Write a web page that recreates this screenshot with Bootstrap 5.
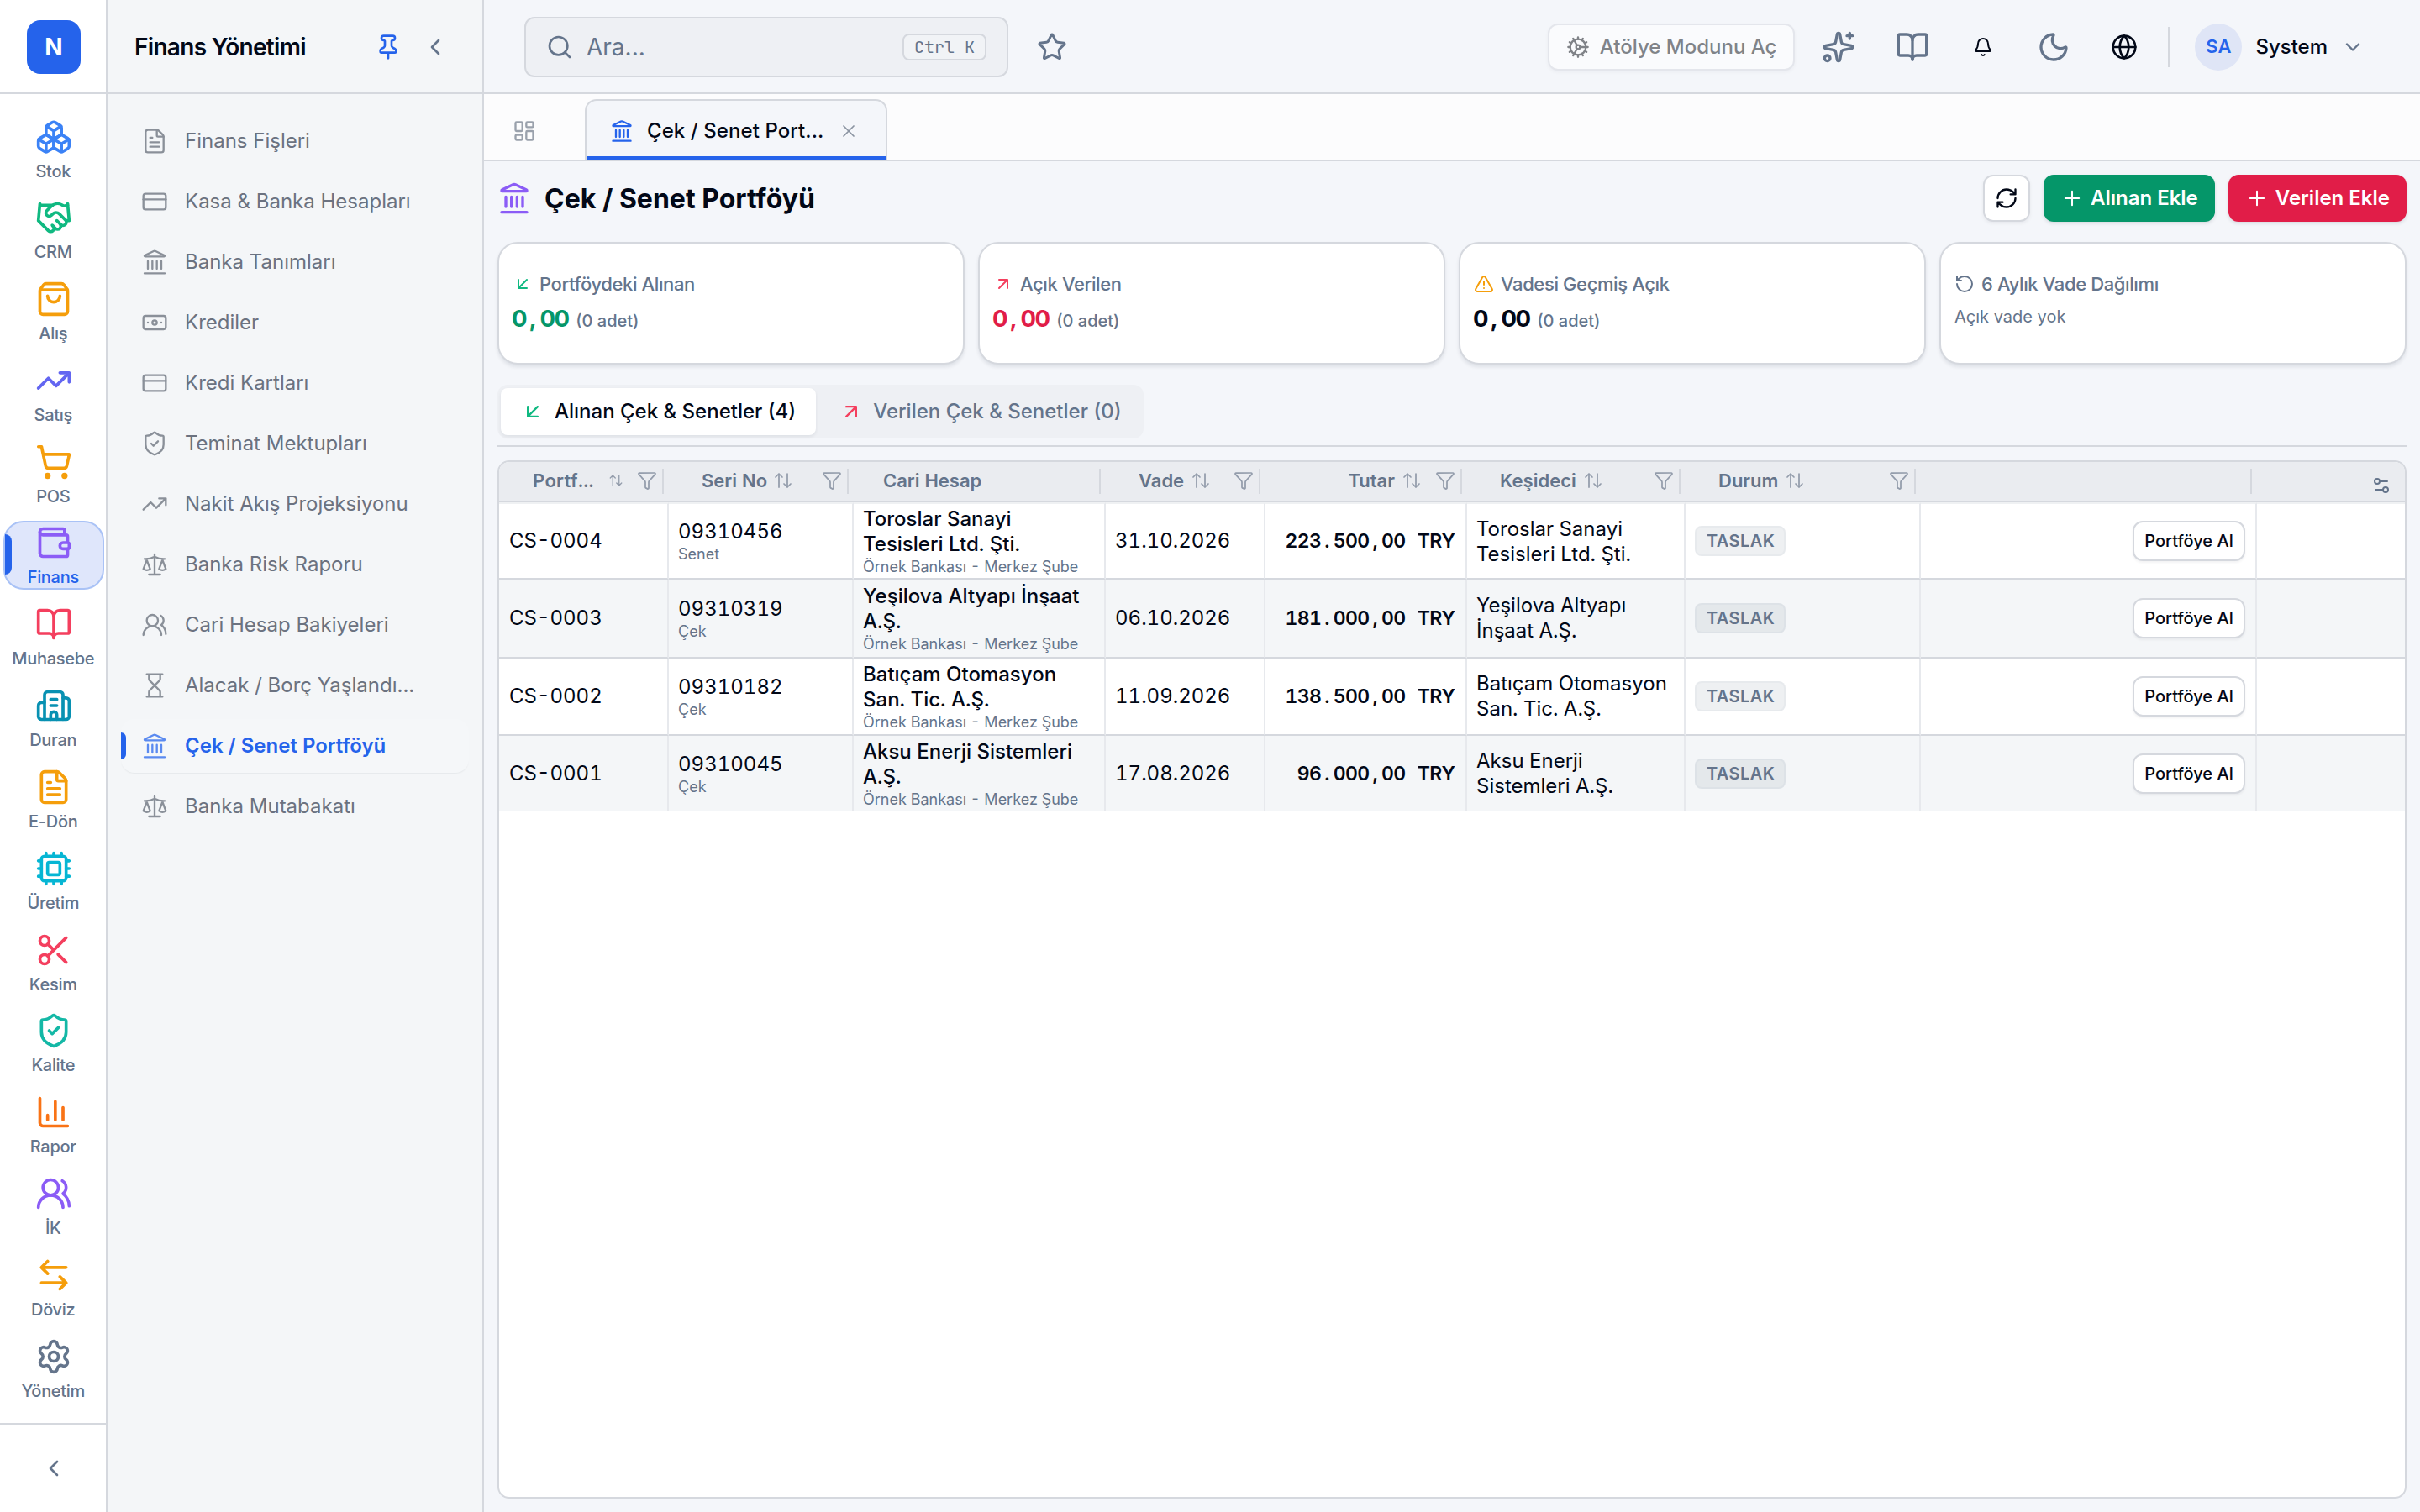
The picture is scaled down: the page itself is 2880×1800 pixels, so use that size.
<!DOCTYPE html>
<html lang="tr">
<head>
<meta charset="utf-8">
<meta name="viewport" content="width=device-width, initial-scale=1">
<title>Çek / Senet Portföyü</title>
<link href="https://cdn.jsdelivr.net/npm/bootstrap@5.3.0/dist/css/bootstrap.min.css" rel="stylesheet">
<script src="https://cdn.jsdelivr.net/npm/bootstrap@5.3.0/dist/js/bootstrap.bundle.min.js"></script>
<style>
:root{--line:#d5d8de;--ink:#020817;--slate:#64748b;--blue:#2563eb;--page:#f4f6fa}
html,body{height:100%}
body{font-family:Inter,"Noto Sans",sans-serif;font-size:24px;line-height:32px;color:var(--ink);background:var(--page);overflow:hidden}
svg.ic{fill:none;stroke:currentColor;stroke-width:2;stroke-linecap:round;stroke-linejoin:round;flex:none;display:block;width:28px;height:28px}
svg.s18{width:18px;height:18px}svg.s24{width:24px;height:24px}svg.s32{width:32px;height:32px}svg.s36{width:36px;height:36px}svg.s40{width:40px;height:40px}svg.s44{width:44px;height:44px}
svg.thin{stroke-width:1.75}
.c-slate{color:var(--slate)}.c-blue{color:var(--blue)}.c-mute{color:#8a93a1}
.w5{font-weight:500}.w6{font-weight:600}

.rail{width:128px;border-right:2px solid var(--line);background:#fff}
.rail-top,.panel-top{height:112px;border-bottom:2px solid var(--line)}
.rail-top{padding-top:2px}
.logo{width:64px;height:64px;border-radius:16px;background:var(--blue);font-size:28px;font-weight:700;color:#fff;margin-left:2px}
.rail-nav{padding:24px 2px 24px 4px}
.rail-item{height:82px;border:2px solid transparent;border-radius:24px;padding-top:2px;gap:6px;position:relative}
.rail-item:not(.on){padding-top:2.6px}
.rail-item span{font-size:20px;line-height:26px;font-weight:500;letter-spacing:-.3px;color:var(--slate);margin-right:1.5px}
.rail-item.on{background:#dfe6fb;border-color:#a9c2f6}
.rail-item.on span{color:var(--blue)}
.rail-item.on::before{content:"";position:absolute;left:0;top:14px;width:8px;height:48px;border-radius:0 8px 8px 0;background:var(--blue)}
.rail-foot{height:106px;border-top:2px solid var(--line);padding-left:2px}

.panel{width:448px;border-right:2px solid var(--line);background:#f4f6f8}
.panel-top{padding:2px 40px 0 32px}
.panel-title{font-size:28px;font-weight:600;letter-spacing:-.7px}
.menu{padding:24px 16px;gap:8px}
.menu-item{height:64px;padding:0 24px;gap:20px;border-radius:16px;color:#6b7280;position:relative}
.menu-item svg{color:#8a9099}
.menu-item.on{color:var(--blue);font-weight:600;background:#f5f7f9;box-shadow:0 2px 2px -1px rgba(15,23,42,.07)}
.menu-item.on svg{color:#5a8af0}
.menu-item.on::before{content:"";position:absolute;left:0;top:16px;width:6px;height:32px;border-radius:0 6px 6px 0;background:var(--blue)}

.topbar{height:112px;border-bottom:2px solid var(--line);padding:2px 66px 0 48px}
.search-box{width:576px;height:72px;border:2px solid var(--line);border-radius:12px;background:#eef0f4;padding:0 24px;gap:16px;font-size:28px;color:var(--slate)}
.keycap{height:32px;border:2px solid var(--line);border-radius:8px;padding:0 12px;font:20px/28px "JetBrains Mono","Liberation Mono",monospace;background:#f1f3f6}
.mode-btn{height:56px;border:2px solid #e4e6ec;border-radius:12px;background:#fafbfd;color:#808388;padding:0 20px;gap:12px;font-weight:500;box-shadow:0 2px 4px rgba(15,23,42,.04)}
.tool{width:72px;height:72px}.tool-n{width:64px;height:64px}
.vbar{width:2px;height:48px;background:var(--line);margin-left:4px}
.avatar{width:56px;height:56px;border-radius:50%;background:#dfe5f6;color:var(--blue);font-weight:600;font-size:22px;padding-bottom:3px}

.tabstrip{height:80px;border-bottom:2px solid var(--line);background:#fcfcfd;padding-left:34px}
.home-tab{width:28px;margin-right:58px;padding-top:10px;color:#9aa1ac}
.doc-tab{width:360px;height:72px;border:2px solid var(--line);border-bottom:0;border-radius:14px 14px 0 0;background:var(--page);padding:1px 0 0 28px;position:relative}
.doc-tab::after{content:"";position:absolute;left:0;right:0;bottom:0;height:4px;background:var(--blue)}
.doc-name{font-weight:500;letter-spacing:.08px;margin:0 18px 0 16px}

.content{padding:16px}
.page-title{font-size:32px;font-weight:700;line-height:40px;padding-top:2px}
.act{height:56px;border-radius:12px;color:#fff;font-weight:600;padding:0 20px;gap:8px;box-shadow:0 2px 4px rgba(15,23,42,.12)}
.act-icon{width:56px;height:56px;border-radius:12px;border:2px solid var(--line);background:#fff;box-shadow:0 2px 4px rgba(15,23,42,.06)}
.bg-rec{background:#059669}.bg-giv{background:#e11d48}
.kpis{gap:16px;margin-top:24px}
.kpi{flex:1 1 0;height:146px;border:2px solid var(--line);border-radius:24px;background:#fff;padding:32px 16px 0;box-shadow:0 3px 4px rgba(15,23,42,.09)}
.kpi-head{font-size:22px;font-weight:500;color:var(--slate);gap:8px;letter-spacing:-.38px}
.kpi-val{gap:8px;line-height:40px;margin-top:5px}
.kpi-val small{font-size:20px;font-weight:500;color:var(--slate)}
.kpi-note{font-size:20px;line-height:28px;margin-top:9px;color:var(--slate)}

.money{font-size:23px;font-weight:600;white-space:pre;letter-spacing:-.6px}
.money i{font-style:normal;display:inline-block;width:14.4px;text-align:center;letter-spacing:0}
.money-lg{font-size:27.5px;font-weight:700;margin-left:-1px;margin-right:1px}
.money-lg i{width:16.8px}

.segs{margin-top:24px}
.seg-wrap{height:64px;border-radius:12px;background:#eef0f4;padding:4px 3px 4px 4px;gap:4px}
.seg{height:56px;border-radius:8px;padding:0 24px;gap:12px;font-weight:500;color:var(--slate)}
.seg:last-child{padding-right:23px}
.seg.on{background:#fff;color:var(--ink);box-shadow:0 2px 4px rgba(15,23,42,.07)}
.rule{height:2px;background:var(--line);margin:8px 0 16px}

.grid-box{border:2px solid var(--line);border-radius:14px;background:#fff;overflow:hidden}
.grid{table-layout:fixed;width:2268px;border-collapse:separate;border-spacing:0;margin:0;font-variant-numeric:tabular-nums;color:var(--ink);line-height:30px}
.grid>thead>tr>th{height:48px;padding:0 14px 2px 40px;background:#eaecf0;border-bottom:2px solid var(--line);font-size:22px;font-weight:600;color:var(--slate);position:relative;vertical-align:middle;box-shadow:none;line-height:28px}
.grid>thead>tr>th:not(:last-child)::after{content:"";position:absolute;right:6px;top:8px;width:2px;height:30px;background:var(--line)}
.grid>thead svg{color:#939cab;stroke-width:1.75}
.grid>tbody>tr>td{height:92px;padding:0 14px 0 11px;border:0 solid var(--line);border-right:2px solid #e7e9ed;border-bottom:2px solid var(--line);vertical-align:middle;background:#fff;box-shadow:none;color:var(--ink)}
.grid>tbody>tr>td:first-child{padding-left:12px}
.grid>tbody>tr>td:nth-child(2){padding-top:2px}
.grid>tbody>tr>td:nth-child(3){padding-top:1px}
.grid>tbody>tr>td:nth-child(6){padding-right:8px}
.grid>tbody>tr:first-child>td:nth-child(6){padding-top:1px}
.grid>tbody>tr>td:nth-child(8){padding-right:12px}
.grid>tbody>tr>td:last-child{border-right:0}
.grid>tbody>tr:first-child>td{border-top:2px solid #eff1f3}
.grid>tbody>tr:nth-child(even)>td{background:#f4f6f8}
.grid>tbody>tr:nth-child(2)>td{height:94px}
.grid>tbody>tr:last-child>td{height:90px;border-bottom:0}
.sub{font-size:18px;line-height:24px;color:var(--slate)}
.state{display:inline-block;height:36px;border:2px solid rgba(100,116,139,.05);border-radius:8px;background:rgba(100,116,139,.11);color:var(--slate);font-size:20px;line-height:32px;font-weight:600;letter-spacing:.4px;padding:0 11px 0 12px;vertical-align:middle}
.row-btn{display:inline-block;height:48px;width:134px;border:2px solid var(--line);border-radius:12px;background:#fff;font-size:20px;font-weight:500;line-height:44px;text-align:center;vertical-align:middle;box-shadow:0 2px 3px rgba(15,23,42,.05);white-space:nowrap}
</style>
</head>
<body>
<svg class="d-none" xmlns="http://www.w3.org/2000/svg">
<symbol id="boxes" viewBox="0 0 24 24"><path d="M2.97 12.92A2 2 0 0 0 2 14.63v3.24a2 2 0 0 0 .97 1.71l3 1.8a2 2 0 0 0 2.06 0L12 19v-5.5l-5-3-4.03 2.42Z"/><path d="m7 16.5-4.74-2.85M7 16.5l5-3M7 16.5v5.17"/><path d="M12 13.5V19l3.97 2.38a2 2 0 0 0 2.06 0l3-1.8a2 2 0 0 0 .97-1.71v-3.24a2 2 0 0 0-.97-1.71L17 10.5l-5 3Z"/><path d="m17 16.5-5-3M17 16.5l4.74-2.85M17 16.5v5.17"/><path d="M7.97 4.42A2 2 0 0 0 7 6.13v4.37l5 3 5-3V6.13a2 2 0 0 0-.97-1.71l-3-1.8a2 2 0 0 0-2.06 0l-3 1.8Z"/><path d="M12 8 7.26 5.15M12 8l4.74-2.85M12 13.5V8"/></symbol>
<symbol id="handshake" viewBox="0 0 24 24"><path d="m11 17 2 2a1 1 0 1 0 3-3"/><path d="m14 14 2.5 2.5a1 1 0 1 0 3-3l-3.88-3.88a3 3 0 0 0-4.24 0l-.88.88a1 1 0 1 1-3-3l2.81-2.81a5.79 5.79 0 0 1 7.06-.87l.47.28a2 2 0 0 0 1.42.25L21 4"/><path d="m21 3 1 11h-2M3 3 2 14l6.5 6.5a1 1 0 1 0 3-3M3 4h8"/></symbol>
<symbol id="bag" viewBox="0 0 24 24"><path d="M16 10a4 4 0 0 1-8 0M3.103 6.034h17.794"/><path d="M3.4 5.467a2 2 0 0 0-.4 1.2V20a2 2 0 0 0 2 2h14a2 2 0 0 0 2-2V6.667a2 2 0 0 0-.4-1.2l-2-2.667A2 2 0 0 0 17 2H7a2 2 0 0 0-1.6.8z"/></symbol>
<symbol id="trend" viewBox="0 0 24 24"><path d="M16 7h6v6M22 7l-8.5 8.5-5-5L2 17"/></symbol>
<symbol id="cart" viewBox="0 0 24 24"><circle cx="8" cy="21" r="1"/><circle cx="19" cy="21" r="1"/><path d="M2.05 2.05h2l2.66 12.42a2 2 0 0 0 2 1.58h9.78a2 2 0 0 0 1.95-1.57l1.65-7.43H5.12"/></symbol>
<symbol id="wallet" viewBox="0 0 24 24"><path d="M19 7V4a1 1 0 0 0-1-1H5a2 2 0 0 0 0 4h15a1 1 0 0 1 1 1v4h-3a2 2 0 0 0 0 4h3a1 1 0 0 0 1-1v-2a1 1 0 0 0-1-1"/><path d="M3 5v14a2 2 0 0 0 2 2h15a1 1 0 0 0 1-1v-4"/></symbol>
<symbol id="book" viewBox="0 0 24 24"><path d="M12 7v14"/><path d="M3 18a1 1 0 0 1-1-1V4a1 1 0 0 1 1-1h5a4 4 0 0 1 4 4 4 4 0 0 1 4-4h5a1 1 0 0 1 1 1v13a1 1 0 0 1-1 1h-6a3 3 0 0 0-3 3 3 3 0 0 0-3-3z"/></symbol>
<symbol id="building" viewBox="0 0 24 24"><path d="M10 12h4M10 8h4M14 21v-3a2 2 0 0 0-4 0v3"/><path d="M6 10H4a2 2 0 0 0-2 2v7a2 2 0 0 0 2 2h16a2 2 0 0 0 2-2V9a2 2 0 0 0-2-2h-2"/><path d="M6 21V5a2 2 0 0 1 2-2h8a2 2 0 0 1 2 2v16"/></symbol>
<symbol id="file" viewBox="0 0 24 24"><path d="M6 22a2 2 0 0 1-2-2V4a2 2 0 0 1 2-2h8a2.4 2.4 0 0 1 1.704.706l3.588 3.588A2.4 2.4 0 0 1 20 8v12a2 2 0 0 1-2 2z"/><path d="M14 2v5a1 1 0 0 0 1 1h5M10 9H8M16 13H8M16 17H8"/></symbol>
<symbol id="cpu" viewBox="0 0 24 24"><path d="M12 20v2M12 2v2M17 20v2M17 2v2M2 12h2M2 17h2M2 7h2M20 12h2M20 17h2M20 7h2M7 20v2M7 2v2"/><rect x="4" y="4" width="16" height="16" rx="2"/><rect x="8" y="8" width="8" height="8" rx="1"/></symbol>
<symbol id="scissors" viewBox="0 0 24 24"><circle cx="6" cy="6" r="3"/><path d="M8.12 8.12 12 12M20 4 8.12 15.88M14.8 14.8 20 20"/><circle cx="6" cy="18" r="3"/></symbol>
<symbol id="shield" viewBox="0 0 24 24"><path d="M20 13c0 5-3.5 7.5-7.66 8.95a1 1 0 0 1-.67-.01C7.5 20.5 4 18 4 13V6a1 1 0 0 1 1-1c2 0 4.5-1.2 6.24-2.72a1.17 1.17 0 0 1 1.52 0C14.51 3.81 17 5 19 5a1 1 0 0 1 1 1z"/><path d="m9 12 2 2 4-4"/></symbol>
<symbol id="chart" viewBox="0 0 24 24"><path d="M3 3v16a2 2 0 0 0 2 2h16M18 17V9M13 17V5M8 17v-3"/></symbol>
<symbol id="users" viewBox="0 0 24 24"><path d="M18 21a8 8 0 0 0-16 0"/><circle cx="10" cy="8" r="5"/><path d="M22 20c0-3.37-2-6.5-4-8a5 5 0 0 0-.45-8.3"/></symbol>
<symbol id="swap" viewBox="0 0 24 24"><path d="M8 3 4 7l4 4M4 7h16M16 21l4-4-4-4M20 17H4"/></symbol>
<symbol id="gear" viewBox="0 0 24 24"><path d="M9.671 4.136a2.34 2.34 0 0 1 4.659 0 2.34 2.34 0 0 0 3.319 1.915 2.34 2.34 0 0 1 2.33 4.033 2.34 2.34 0 0 0 0 3.831 2.34 2.34 0 0 1-2.33 4.033 2.34 2.34 0 0 0-3.319 1.915 2.34 2.34 0 0 1-4.659 0 2.34 2.34 0 0 0-3.32-1.915 2.34 2.34 0 0 1-2.33-4.033 2.34 2.34 0 0 0 0-3.831A2.34 2.34 0 0 1 6.35 6.051a2.34 2.34 0 0 0 3.319-1.915"/><circle cx="12" cy="12" r="3"/></symbol>
<symbol id="card-ic" viewBox="0 0 24 24"><rect x="2" y="5" width="20" height="14" rx="2"/><path d="M2 10h20"/></symbol>
<symbol id="bank" viewBox="0 0 24 24"><path d="M10 18v-7M11.12 2.198a2 2 0 0 1 1.76.006l7.866 3.847c.476.233.31.949-.22.949H3.474c-.53 0-.695-.716-.22-.949zM14 18v-7M18 18v-7M3 22h18M6 18v-7"/></symbol>
<symbol id="note" viewBox="0 0 24 24"><rect x="2" y="6" width="20" height="12" rx="2"/><circle cx="12" cy="12" r="2"/><path d="M6 12h.01M18 12h.01"/></symbol>
<symbol id="scale" viewBox="0 0 24 24"><path d="M12 3v18M19 8l3 8a5 5 0 0 1-6 0zV7M3 7h1a17 17 0 0 0 8-2 17 17 0 0 0 8 2h1M5 8l3 8a5 5 0 0 1-6 0zV7M7 21h10"/></symbol>
<symbol id="hourglass" viewBox="0 0 24 24"><path d="M5 22h14M5 2h14M17 22v-4.172a2 2 0 0 0-.586-1.414L12 12l-4.414 4.414A2 2 0 0 0 7 17.828V22M7 2v4.172a2 2 0 0 0 .586 1.414L12 12l4.414-4.414A2 2 0 0 0 17 6.172V2"/></symbol>
<symbol id="pin" viewBox="0 0 24 24"><path d="M12 17v5M9 10.76a2 2 0 0 1-1.11 1.79l-1.78.9A2 2 0 0 0 5 15.24V16a1 1 0 0 0 1 1h12a1 1 0 0 0 1-1v-.76a2 2 0 0 0-1.11-1.79l-1.78-.9A2 2 0 0 1 15 10.76V7a1 1 0 0 1 1-1 2 2 0 0 0 0-4H8a2 2 0 0 0 0 4 1 1 0 0 1 1 1z"/></symbol>
<symbol id="left" viewBox="0 0 24 24"><path d="m15 18-6-6 6-6"/></symbol>
<symbol id="down" viewBox="0 0 24 24"><path d="m6 9 6 6 6-6"/></symbol>
<symbol id="find" viewBox="0 0 24 24"><path d="m21 21-4.34-4.34"/><circle cx="11" cy="11" r="8"/></symbol>
<symbol id="star" viewBox="0 0 24 24"><path d="M11.525 2.295a.53.53 0 0 1 .95 0l2.31 4.679a2.123 2.123 0 0 0 1.595 1.16l5.166.756a.53.53 0 0 1 .294.904l-3.736 3.638a2.123 2.123 0 0 0-.611 1.878l.882 5.14a.53.53 0 0 1-.771.56l-4.618-2.428a2.122 2.122 0 0 0-1.973 0L6.396 21.01a.53.53 0 0 1-.77-.56l.881-5.139a2.122 2.122 0 0 0-.611-1.879L2.16 9.795a.53.53 0 0 1 .294-.906l5.165-.755a2.122 2.122 0 0 0 1.597-1.16z"/></symbol>
<symbol id="cog" viewBox="0 0 24 24"><path d="M11 10.27 7 3.34M11 13.73l-4 6.93M12 22v-2M12 2v2M14 12h8M17 20.66l-1-1.73M17 3.34l-1 1.73M2 12h2M20.66 17l-1.73-1M20.66 7l-1.73 1M3.34 17l1.73-1M3.34 7l1.73 1"/><circle cx="12" cy="12" r="2"/><circle cx="12" cy="12" r="8"/></symbol>
<symbol id="sparkles" viewBox="0 0 24 24"><path d="M11.017 2.814a1 1 0 0 1 1.966 0l1.051 5.558a2 2 0 0 0 1.594 1.594l5.558 1.051a1 1 0 0 1 0 1.966l-5.558 1.051a2 2 0 0 0-1.594 1.594l-1.051 5.558a1 1 0 0 1-1.966 0l-1.051-5.558a2 2 0 0 0-1.594-1.594l-5.558-1.051a1 1 0 0 1 0-1.966l5.558-1.051a2 2 0 0 0 1.594-1.594zM20 2v4M22 4h-4"/><circle cx="4" cy="20" r="2"/></symbol>
<symbol id="bell" viewBox="0 0 24 24"><path d="M10.268 21a2 2 0 0 0 3.464 0M3.262 15.326A1 1 0 0 0 4 17h16a1 1 0 0 0 .74-1.673C19.41 13.956 18 12.499 18 8A6 6 0 0 0 6 8c0 4.499-1.411 5.956-2.738 7.326"/></symbol>
<symbol id="moon" viewBox="0 0 24 24"><path d="M20.985 12.486a9 9 0 1 1-9.473-9.472c.405-.022.617.46.402.803a6 6 0 0 0 8.268 8.268c.344-.215.825-.004.803.401"/></symbol>
<symbol id="globe" viewBox="0 0 24 24"><circle cx="12" cy="12" r="10"/><path d="M12 2a14.5 14.5 0 0 0 0 20 14.5 14.5 0 0 0 0-20M2 12h20"/></symbol>
<symbol id="dash" viewBox="0 0 24 24"><rect x="3" y="3" width="7" height="9" rx="1"/><rect x="14" y="3" width="7" height="5" rx="1"/><rect x="14" y="12" width="7" height="9" rx="1"/><rect x="3" y="16" width="7" height="5" rx="1"/></symbol>
<symbol id="close" viewBox="0 0 24 24"><path d="M18 6 6 18M6 6l12 12"/></symbol>
<symbol id="refresh" viewBox="0 0 24 24"><path d="M3 12a9 9 0 0 1 9-9 9.75 9.75 0 0 1 6.74 2.74L21 8M21 3v5h-5M21 12a9 9 0 0 1-9 9 9.75 9.75 0 0 1-6.74-2.74L3 16M8 16H3v5"/></symbol>
<symbol id="plus" viewBox="0 0 24 24"><path d="M5 12h14M12 5v14"/></symbol>
<symbol id="dl" viewBox="0 0 24 24"><path d="M17 7 7 17M17 17H7V7"/></symbol>
<symbol id="ur" viewBox="0 0 24 24"><path d="M7 7h10v10M7 17 17 7"/></symbol>
<symbol id="warn" viewBox="0 0 24 24"><path d="m21.73 18-8-14a2 2 0 0 0-3.48 0l-8 14A2 2 0 0 0 4 21h16a2 2 0 0 0 1.73-3M12 9v4M12 17h.01"/></symbol>
<symbol id="ccw" viewBox="0 0 24 24"><path d="M3 12a9 9 0 1 0 9-9 9.75 9.75 0 0 0-6.74 2.74L3 8M3 3v5h5"/></symbol>
<symbol id="funnel" viewBox="0 0 24 24"><path d="M10 20a1 1 0 0 0 .553.895l2 1A1 1 0 0 0 14 21v-7a2 2 0 0 1 .517-1.341L21.74 4.67A1 1 0 0 0 21 3H3a1 1 0 0 0-.742 1.67l7.225 7.989A2 2 0 0 1 10 14z"/></symbol>
<symbol id="sort" viewBox="0 0 24 24"><path d="m21 16-4 4-4-4M17 20V4M3 8l4-4 4 4M7 4v16"/></symbol>
<symbol id="tune" viewBox="0 0 24 24"><path d="M14 17H5M19 7h-9"/><circle cx="17" cy="17" r="3"/><circle cx="7" cy="7" r="3"/></symbol>
</svg>

<div class="d-flex vh-100">
  <aside class="rail d-flex flex-column flex-shrink-0">
    <div class="rail-top d-flex align-items-center justify-content-center"><div class="logo d-flex align-items-center justify-content-center">N</div></div>
    <nav class="rail-nav d-flex flex-column justify-content-between flex-grow-1">
      <a class="rail-item d-flex flex-column align-items-center text-decoration-none"><svg class="ic s44" style="color:#3b82f6"><use href="#boxes"/></svg><span>Stok</span></a>
      <a class="rail-item d-flex flex-column align-items-center text-decoration-none"><svg class="ic s44" style="color:#10b981"><use href="#handshake"/></svg><span>CRM</span></a>
      <a class="rail-item d-flex flex-column align-items-center text-decoration-none"><svg class="ic s44" style="color:#f59e0b"><use href="#bag"/></svg><span>Alış</span></a>
      <a class="rail-item d-flex flex-column align-items-center text-decoration-none"><svg class="ic s44" style="color:#6366f1"><use href="#trend"/></svg><span>Satış</span></a>
      <a class="rail-item d-flex flex-column align-items-center text-decoration-none"><svg class="ic s44" style="color:#f59e0b"><use href="#cart"/></svg><span>POS</span></a>
      <a class="rail-item on d-flex flex-column align-items-center text-decoration-none"><svg class="ic s44" style="color:#8b5cf6"><use href="#wallet"/></svg><span>Finans</span></a>
      <a class="rail-item d-flex flex-column align-items-center text-decoration-none"><svg class="ic s44" style="color:#f43f5e"><use href="#book"/></svg><span>Muhasebe</span></a>
      <a class="rail-item d-flex flex-column align-items-center text-decoration-none"><svg class="ic s44" style="color:#0891b2"><use href="#building"/></svg><span>Duran</span></a>
      <a class="rail-item d-flex flex-column align-items-center text-decoration-none"><svg class="ic s44" style="color:#f59e0b"><use href="#file"/></svg><span>E-Dön</span></a>
      <a class="rail-item d-flex flex-column align-items-center text-decoration-none"><svg class="ic s44" style="color:#06b6d4"><use href="#cpu"/></svg><span>Üretim</span></a>
      <a class="rail-item d-flex flex-column align-items-center text-decoration-none"><svg class="ic s44" style="color:#f43f5e"><use href="#scissors"/></svg><span>Kesim</span></a>
      <a class="rail-item d-flex flex-column align-items-center text-decoration-none"><svg class="ic s44" style="color:#14b8a6"><use href="#shield"/></svg><span>Kalite</span></a>
      <a class="rail-item d-flex flex-column align-items-center text-decoration-none"><svg class="ic s44" style="color:#f97316"><use href="#chart"/></svg><span>Rapor</span></a>
      <a class="rail-item d-flex flex-column align-items-center text-decoration-none"><svg class="ic s44" style="color:#8b5cf6"><use href="#users"/></svg><span>İK</span></a>
      <a class="rail-item d-flex flex-column align-items-center text-decoration-none"><svg class="ic s44" style="color:#f59e0b"><use href="#swap"/></svg><span>Döviz</span></a>
      <a class="rail-item d-flex flex-column align-items-center text-decoration-none"><svg class="ic s44 c-slate"><use href="#gear"/></svg><span>Yönetim</span></a>
    </nav>
    <div class="rail-foot d-flex align-items-center justify-content-center c-slate"><svg class="ic s32"><use href="#left"/></svg></div>
  </aside>

  <aside class="panel flex-shrink-0">
    <div class="panel-top d-flex align-items-center">
      <div class="panel-title me-auto">Finans Yönetimi</div>
      <svg class="ic s32 c-blue me-4"><use href="#pin"/></svg>
      <svg class="ic s32 c-slate"><use href="#left"/></svg>
    </div>
    <nav class="menu d-flex flex-column">
      <a class="menu-item d-flex align-items-center text-decoration-none"><svg class="ic s32 thin"><use href="#file"/></svg><span>Finans Fişleri</span></a>
      <a class="menu-item d-flex align-items-center text-decoration-none"><svg class="ic s32 thin"><use href="#card-ic"/></svg><span>Kasa &amp; Banka Hesapları</span></a>
      <a class="menu-item d-flex align-items-center text-decoration-none"><svg class="ic s32 thin"><use href="#bank"/></svg><span>Banka Tanımları</span></a>
      <a class="menu-item d-flex align-items-center text-decoration-none"><svg class="ic s32 thin"><use href="#note"/></svg><span>Krediler</span></a>
      <a class="menu-item d-flex align-items-center text-decoration-none"><svg class="ic s32 thin"><use href="#card-ic"/></svg><span>Kredi Kartları</span></a>
      <a class="menu-item d-flex align-items-center text-decoration-none"><svg class="ic s32 thin"><use href="#shield"/></svg><span>Teminat Mektupları</span></a>
      <a class="menu-item d-flex align-items-center text-decoration-none"><svg class="ic s32 thin"><use href="#trend"/></svg><span>Nakit Akış Projeksiyonu</span></a>
      <a class="menu-item d-flex align-items-center text-decoration-none"><svg class="ic s32 thin"><use href="#scale"/></svg><span>Banka Risk Raporu</span></a>
      <a class="menu-item d-flex align-items-center text-decoration-none"><svg class="ic s32 thin"><use href="#users"/></svg><span>Cari Hesap Bakiyeleri</span></a>
      <a class="menu-item d-flex align-items-center text-decoration-none"><svg class="ic s32 thin"><use href="#hourglass"/></svg><span>Alacak / Borç Yaşlandı...</span></a>
      <a class="menu-item on d-flex align-items-center text-decoration-none"><svg class="ic s32 thin"><use href="#bank"/></svg><span>Çek / Senet Portföyü</span></a>
      <a class="menu-item d-flex align-items-center text-decoration-none"><svg class="ic s32 thin"><use href="#scale"/></svg><span>Banka Mutabakatı</span></a>
    </nav>
  </aside>

  <main class="d-flex flex-column flex-grow-1">
    <header class="topbar d-flex align-items-center flex-shrink-0">
      <div class="search-box d-flex align-items-center"><svg class="ic s32"><use href="#find"/></svg><span class="me-auto">Ara...</span><span class="keycap">Ctrl K</span></div>
      <svg class="ic s36 c-slate me-auto" style="margin-left:34px"><use href="#star"/></svg>
      <div class="d-flex align-items-center gap-3">
        <div class="mode-btn d-flex align-items-center"><svg class="ic"><use href="#cog"/></svg>Atölye Modunu Aç</div>
        <div class="tool d-flex align-items-center justify-content-center c-slate"><svg class="ic s40"><use href="#sparkles"/></svg></div>
        <div class="tool d-flex align-items-center justify-content-center c-slate"><svg class="ic s40"><use href="#book"/></svg></div>
        <div class="tool-n d-flex align-items-center justify-content-center"><svg class="ic s24"><use href="#bell"/></svg></div>
        <div class="tool d-flex align-items-center justify-content-center c-slate"><svg class="ic s40"><use href="#moon"/></svg></div>
        <div class="tool-n d-flex align-items-center justify-content-center"><svg class="ic s32"><use href="#globe"/></svg></div>
        <div class="vbar"></div>
      </div>
      <div class="d-flex align-items-center" style="margin-left:30px">
        <div class="avatar d-flex align-items-center justify-content-center">SA</div>
        <span class="w5 mx-3">System</span>
        <svg class="ic c-slate"><use href="#down"/></svg>
      </div>
    </header>

    <div class="tabstrip d-flex align-items-end flex-shrink-0">
      <div class="home-tab align-self-center"><svg class="ic"><use href="#dash"/></svg></div>
      <div class="doc-tab d-flex align-items-center">
        <svg class="ic c-blue"><use href="#bank"/></svg><span class="doc-name">Çek / Senet Port...</span><svg class="ic s24 c-mute thin"><use href="#close"/></svg>
      </div>
    </div>

    <section class="content d-flex flex-column flex-grow-1">
      <div class="d-flex align-items-center gap-3">
        <svg class="ic s40" style="color:#8b5cf6"><use href="#bank"/></svg>
        <h1 class="page-title m-0 me-auto">Çek / Senet Portföyü</h1>
        <div class="act-icon d-flex align-items-center justify-content-center"><svg class="ic"><use href="#refresh"/></svg></div>
        <div class="act bg-rec d-flex align-items-center"><svg class="ic thin"><use href="#plus"/></svg>Alınan Ekle</div>
        <div class="act bg-giv d-flex align-items-center"><svg class="ic thin"><use href="#plus"/></svg>Verilen Ekle</div>
      </div>

      <div class="kpis d-flex">
        <div class="kpi">
          <div class="kpi-head d-flex align-items-center"><svg class="ic s24" style="color:#10b981"><use href="#dl"/></svg>Portföydeki Alınan</div>
          <div class="kpi-val d-flex align-items-baseline"><span class="money money-lg" style="color:#059669"><i>0</i><i>,</i><i>0</i><i>0</i></span><small>(0 adet)</small></div>
        </div>
        <div class="kpi">
          <div class="kpi-head d-flex align-items-center"><svg class="ic s24" style="color:#f43f5e"><use href="#ur"/></svg>Açık Verilen</div>
          <div class="kpi-val d-flex align-items-baseline"><span class="money money-lg" style="color:#e11d48"><i>0</i><i>,</i><i>0</i><i>0</i></span><small>(0 adet)</small></div>
        </div>
        <div class="kpi">
          <div class="kpi-head d-flex align-items-center"><svg class="ic s24" style="color:#f59e0b"><use href="#warn"/></svg>Vadesi Geçmiş Açık</div>
          <div class="kpi-val d-flex align-items-baseline"><span class="money money-lg"><i>0</i><i>,</i><i>0</i><i>0</i></span><small>(0 adet)</small></div>
        </div>
        <div class="kpi">
          <div class="kpi-head d-flex align-items-center"><svg class="ic s24"><use href="#ccw"/></svg>6 Aylık Vade Dağılımı</div>
          <div class="kpi-note">Açık vade yok</div>
        </div>
      </div>

      <div class="segs d-flex">
        <div class="seg-wrap d-flex">
          <div class="seg on d-flex align-items-center"><svg class="ic" style="color:#10b981"><use href="#dl"/></svg>Alınan Çek &amp; Senetler (4)</div>
          <div class="seg d-flex align-items-center"><svg class="ic" style="color:#f43f5e"><use href="#ur"/></svg>Verilen Çek &amp; Senetler (0)</div>
        </div>
      </div>
      <div class="rule"></div>

      <div class="grid-box flex-grow-1">
        <table class="table grid">
          <colgroup><col style="width:202px"><col style="width:220px"><col style="width:300px"><col style="width:190px"><col style="width:240px"><col style="width:260px"><col style="width:280px"><col style="width:400px"><col style="width:176px"></colgroup>
          <thead><tr>
            <th><div class="d-flex align-items-center"><span style="letter-spacing:.35px">Portf...</span><svg class="ic s18 ms-auto me-3"><use href="#sort"/></svg><svg class="ic s24"><use href="#funnel"/></svg></div></th>
            <th style="padding-left:39px"><div class="d-flex align-items-center">Seri No<svg class="ic s24" style="margin-left:7px"><use href="#sort"/></svg><svg class="ic s24 ms-auto"><use href="#funnel"/></svg></div></th>
            <th style="padding-left:35px">Cari Hesap</th>
            <th style="padding-left:39px"><div class="d-flex align-items-center">Vade<svg class="ic s24 ms-2"><use href="#sort"/></svg><svg class="ic s24 ms-auto"><use href="#funnel"/></svg></div></th>
            <th><div class="d-flex align-items-center justify-content-end">Tutar<svg class="ic s24 ms-2 me-3"><use href="#sort"/></svg><svg class="ic s24"><use href="#funnel"/></svg></div></th>
            <th style="padding-left:39px"><div class="d-flex align-items-center">Keşideci<svg class="ic s24 ms-2"><use href="#sort"/></svg><svg class="ic s24 ms-auto"><use href="#funnel"/></svg></div></th>
            <th style="padding-left:39px"><div class="d-flex align-items-center">Durum<svg class="ic s24 ms-2"><use href="#sort"/></svg><svg class="ic s24 ms-auto"><use href="#funnel"/></svg></div></th>
            <th></th>
            <th style="padding:10px 16px 0 0"><svg class="ic s24 ms-auto" style="color:#64748b;stroke-width:2"><use href="#tune"/></svg></th>
          </tr></thead>
          <tbody>
            <tr><td>CS-0004</td><td><div>09310456</div><div class="sub">Senet</div></td><td><div class="w5">Toroslar Sanayi Tesisleri Ltd. Şti.</div><div class="sub">Örnek Bankası - Merkez Şube</div></td><td>31.10.2026</td><td class="text-end"><span class="money">223<i>.</i>500<i>,</i>00<i> </i><i>T</i><i>R</i><i>Y</i></span></td><td>Toroslar Sanayi Tesisleri Ltd. Şti.</td><td><span class="state">TASLAK</span></td><td class="text-end"><span class="row-btn">Portföye Al</span></td><td></td></tr>
            <tr><td>CS-0003</td><td><div>09310319</div><div class="sub">Çek</div></td><td><div class="w5">Yeşilova Altyapı İnşaat A.Ş.</div><div class="sub">Örnek Bankası - Merkez Şube</div></td><td>06.10.2026</td><td class="text-end"><span class="money">181<i>.</i>000<i>,</i>00<i> </i><i>T</i><i>R</i><i>Y</i></span></td><td>Yeşilova Altyapı İnşaat A.Ş.</td><td><span class="state">TASLAK</span></td><td class="text-end"><span class="row-btn">Portföye Al</span></td><td></td></tr>
            <tr><td>CS-0002</td><td><div>09310182</div><div class="sub">Çek</div></td><td><div class="w5">Batıçam Otomasyon San. Tic. A.Ş.</div><div class="sub">Örnek Bankası - Merkez Şube</div></td><td>11.09.2026</td><td class="text-end"><span class="money">138<i>.</i>500<i>,</i>00<i> </i><i>T</i><i>R</i><i>Y</i></span></td><td>Batıçam Otomasyon San. Tic. A.Ş.</td><td><span class="state">TASLAK</span></td><td class="text-end"><span class="row-btn">Portföye Al</span></td><td></td></tr>
            <tr><td>CS-0001</td><td><div>09310045</div><div class="sub">Çek</div></td><td><div class="w5">Aksu Enerji Sistemleri A.Ş.</div><div class="sub">Örnek Bankası - Merkez Şube</div></td><td>17.08.2026</td><td class="text-end"><span class="money">96<i>.</i>000<i>,</i>00<i> </i><i>T</i><i>R</i><i>Y</i></span></td><td>Aksu Enerji Sistemleri A.Ş.</td><td><span class="state">TASLAK</span></td><td class="text-end"><span class="row-btn">Portföye Al</span></td><td></td></tr>
          </tbody>
        </table>
      </div>
    </section>
  </main>
</div>
</body>
</html>
